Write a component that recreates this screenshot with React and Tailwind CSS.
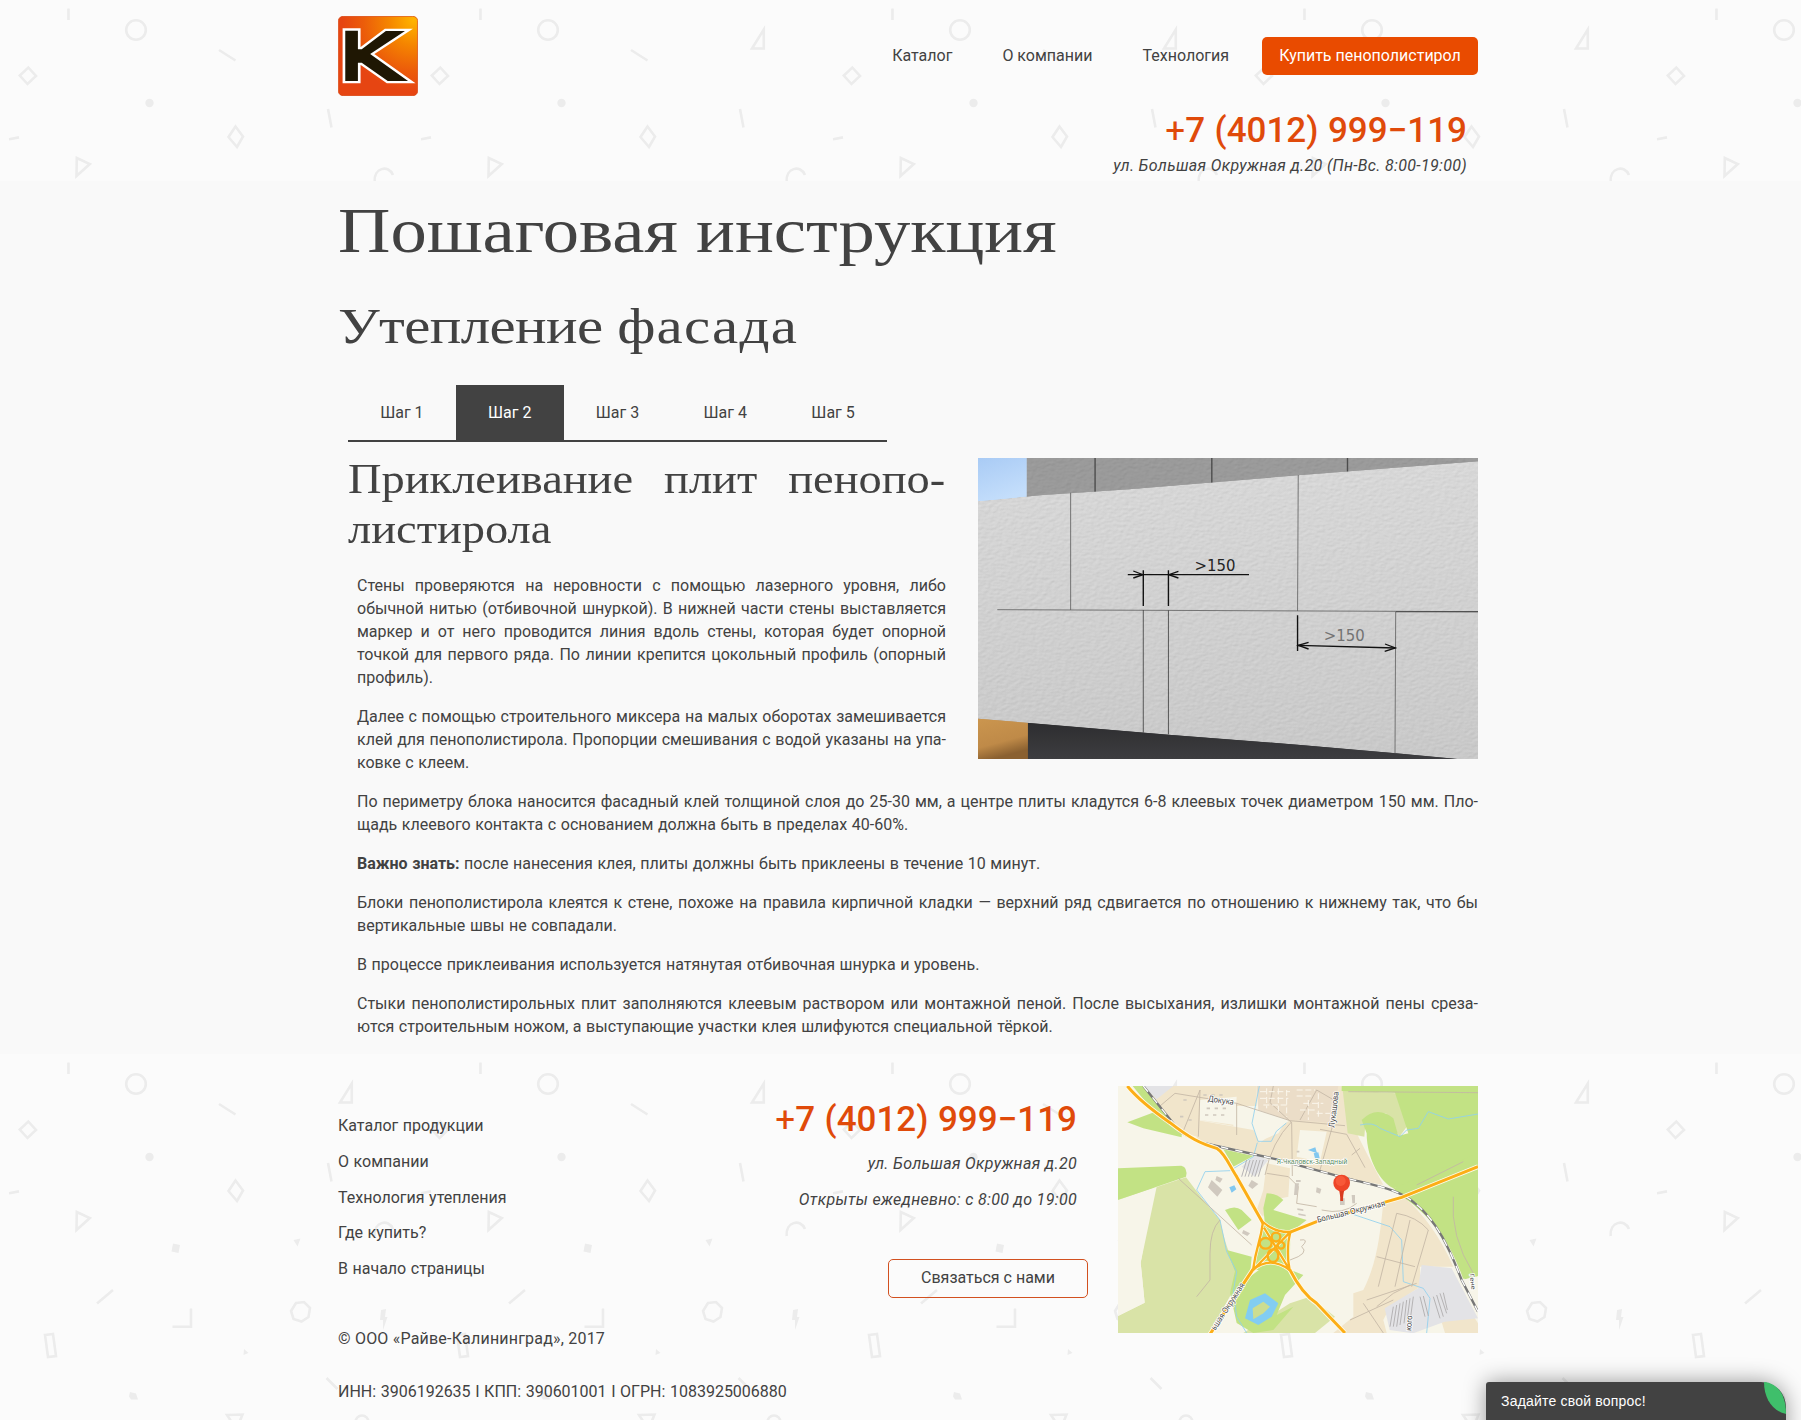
import React from "react";

function Pattern({ id }) {
  return (
    <svg className="absolute inset-0 h-full w-full" aria-hidden="true">
      <defs>
        <pattern id={id} width="412" height="412" patternUnits="userSpaceOnUse">
          <g fill="none" stroke="#ececec" strokeWidth="2.6">
            <path d="M68.5 8.5v11.5M219 50l16.5 10.500M328 109l3.500 18.500M9 139.200l10-1.800M113 236l-16 13.500M326.500 324l11 11" />
            <circle cx="136" cy="30" r="9.800" />
            <path d="M340 48.500h11.800v-19z" />
            <path d="M28.300 67.500l7.700 8.500-8.500 8-7.700-8.500z" />
            <path d="M235.500 126.500l7.500 10-6 10.500-8.500-10z" />
            <path d="M76.800 158l13 6-13.300 12z" />
            <path d="M374.700 182c-1.500-14 14-18 18.300-7" />
            <path d="M191 254.500v18.300h-18.500" />
            <path d="M296 249l8-1 6 6-1.500 9-7 4.500-8-2.500-2.500-8z" />
            <path d="M45 281l8-1 3 22-8 1z" />
            <path d="M227 361l15.500-.5-6 15z" />
            <circle cx="362" cy="368" r="6.500" />
          </g>
          <g fill="#ececec">
            <circle cx="149.500" cy="103" r="4.200" />
            <path d="M173 189.500l7 1.500-1.500 8-7-1.500zM293.500 186l7-1.500-3 8zM381 256l5-1-1 8h2.500l-4.500 13 0-10h-3zM244 295l4.500 4-5 2zM130 338l6 1.500 2 6-7 0-2-3z" />
          </g>
        </pattern>
      </defs>
      <rect width="100%" height="100%" fill={`url(#${id})`} />
    </svg>
  );
}

function Logo() {
  const k = "M902 92h33v56h10l63-55h50l-91 69 99 81h-53l-68-55h-10v55h-33z";
  return (
    <svg className="block h-20 w-20" viewBox="883 48 209 240" preserveAspectRatio="none">
      <defs>
        <radialGradient id="logo-fill" cx="0.95" cy="0.05" r="0.9">
          <stop offset="0" stopColor="#ffb400" />
          <stop offset="0.35" stopColor="#f58500" />
          <stop offset="0.7" stopColor="#ec5d0a" />
          <stop offset="1" stopColor="#e64512" />
        </radialGradient>
      </defs>
      <rect x="884" y="49" width="207" height="238" rx="13" fill="url(#logo-fill)" stroke="#d8440f" strokeWidth="2" />
      <path d={k} fill="#fff" stroke="#fff" strokeWidth="14" strokeLinejoin="miter" />
      <path d={k} fill="#1f1703" />
    </svg>
  );
}

function WallPhoto() {
  return (
    <svg className="block h-[301px] w-[500px] shrink-0" viewBox="52 54 1452 903" preserveAspectRatio="none">
      <defs>
        <linearGradient id="sky" x1="0" y1="0" x2="0.4" y2="1">
          <stop offset="0" stopColor="#a9cbf5" />
          <stop offset="1" stopColor="#c4defb" />
        </linearGradient>
        <linearGradient id="foam" x1="0" y1="0" x2="0" y2="1">
          <stop offset="0" stopColor="#d8d8d8" />
          <stop offset="1" stopColor="#c9c9c9" />
        </linearGradient>
        <linearGradient id="sand" x1="0" y1="0" x2="0.3" y2="1">
          <stop offset="0" stopColor="#cd9850" />
          <stop offset="0.7" stopColor="#bf8a48" />
          <stop offset="1" stopColor="#8a6030" />
        </linearGradient>
        <linearGradient id="base" x1="0" y1="0" x2="0" y2="1">
          <stop offset="0" stopColor="#2b2b2d" />
          <stop offset="1" stopColor="#3d3d40" />
        </linearGradient>
        <filter id="grain" x="0" y="0" width="100%" height="100%">
          <feTurbulence type="fractalNoise" baseFrequency="0.07 0.12" numOctaves="3" seed="4" result="n" />
          <feDiffuseLighting in="n" surfaceScale="1" lightingColor="#fff" result="l">
            <feDistantLight azimuth="235" elevation="60" />
          </feDiffuseLighting>
          <feComposite in="l" in2="SourceGraphic" operator="arithmetic" k1="1.15" k2="0" k3="0" k4="0" />
          <feComposite in2="SourceGraphic" operator="in" />
        </filter>
      </defs>
      <path d="M52 54h142v130H52z" fill="url(#sky)" />
      <path d="M193 54h1311v140H193z" fill="#9a9a9a" filter="url(#grain)" />
      <path d="M392 54v104M731 54v76M1125 54v44" stroke="#4c4c4c" strokeWidth="4" />
      <path d="M52 820h146v137H52z" fill="url(#sand)" />
      <path d="M197 830h1307v127H197z" fill="url(#base)" />
      <path d="M52 184L240 165 490 148 980 106 1504 64V957h-60L1265 940 980 914 605 884 200 849 52 836z" fill="url(#foam)" filter="url(#grain)" />
      <g fill="none" stroke="#626262" strokeWidth="2.500">
        <path d="M321 158v352M982 105l-2 408M108 509l1396 6M1265 516l-2 424" />
        <path d="M532 510v368M605 511v372" stroke="#414141" />
        <path d="M1265 515h239" stroke="#444" strokeWidth="3" />
      </g>
      <g fill="none" stroke="#111" strokeWidth="4">
        <path d="M532 391v107M605 391v107M487 404h352M980 526v107M982 616l282 8" />
        <path d="M503 393l28 11-28 10M634 394l-28 10 28 10M1012 607l-30 9 30 11M1234 612l30 12-31 10" />
      </g>
      <g fontSize="46" fontFamily="DejaVu Sans">
        <text x="681" y="392" textLength="119" lengthAdjust="spacingAndGlyphs" fill="#242424">&gt;150</text>
        <text x="1056" y="604" textLength="119" lengthAdjust="spacingAndGlyphs" fill="#737373">&gt;150</text>
      </g>
    </svg>
  );
}

function AreaMap() {
  const roads = "M82 48Q120 95 210 158C270 205 300 220 350 235C375 250 390 290 410 320L489 460M1134 290L905 382L650 455L569 487M459 598L325 800M569 598C590 640 620 680 650 700L735 789";
  const junction = "M435 408Q431 440 421 475T405 552M435 408Q470 440 517 438M517 438Q503 490 515 552M405 552Q455 508 515 552M438 425L515 552M515 440L405 552";
  return (
    <svg className="block h-[247px] w-[360px]" viewBox="54 48 1080 741" preserveAspectRatio="none">
      <path d="M54 48h1080v741H54z" fill="#f7f5e9" />
      <g fill="#f1e5cb">
        <path d="M130 48h340v60h-70v60l-100 -18-8 50-40-10-130-140z" />
        <path d="M290 150L460 180 480 218 570 150 560 48H725L745 130 770 190 800 250 850 345 740 325 530 265 290 210z" />
        <path d="M500 280l70 15-5 85-45 10-10-15-20 65-20-20 20-60z" />
        <path d="M850 395L910 380C970 430 1020 500 1060 590L960 590 960 650 870 710 850 750 860 789H700L760 740V670L790 660C830 580 840 500 850 395z" />
        <path d="M1020 740l95-10 19 30v29H1035z" />
      </g>
      <path d="M470 48h245l-20 110-130-8-90-30z" fill="#ebddc8" />
      <path d="M300 90l110-10-5 85-105-15zM470 120l90 30-25 40-60 25zM600 180l80 5-20 90-70-15z" fill="#f7f5e9" />
      <path d="M130 48h90l-50 40zM425 290l40-35 40 15-40 50zM965 585l90 10 79 150-100 10-95 35-70-10-15-65 100-60z" fill="#e3e3e6" />
      <g fill="#d9e3a7">
        <path d="M54 390L258 322 310 390 360 450C370 500 385 550 410 600L400 660 330 789H54V738l80-40-12-120 40-230z" />
        <path d="M728 60l160 10 40 90-30 40-40-70-60 10-5 60-50-10z" />
        <path d="M570 700l60-20 75 60-60 49H430z" />
      </g>
      <path d="M54 390L170 350 122 578 134 698 54 738z" fill="#f7f5e9" />
      <g fill="#c2e284">
        <path d="M98 48h32L245 190v12L130 175l-48-18 80-30z" />
        <path d="M54 295l190-8q20 5 14 33L54 390z" />
        <path d="M725 48h409v570l-40 10C1060 540 1020 440 930 385L1134 290 880 355C845 340 800 270 800 190L785 150 Q830 105 880 145L895 198 925 190 885 68l-160-5z" />
        <path d="M880 355L1134 250V300L910 385z" />
        <path d="M910 382L1134 294V618l-45 8C1060 540 1010 450 910 382z" />
        <path d="M370 238l90 20-60 32zM500 370q30 0 50 20l-30 30 100 30-45 35-80-20-5-50zM375 420q30-15 50 0l30 30-40 30z" />
        <path d="M380 540l75 20-5 60 60-45 100 40-55 60-25 60 50-25-60 70-60 9-50-30-20-90 15-65z" />
        <path d="M489 456L571 486 569 600 459 600z" />
      </g>
      <g fill="none" stroke="#8fd0ee" strokeWidth="2.500">
        <path d="M478 48l-22 112 18 54 40 0 15-30 30-25M472 218L460 260 390 302 315 305 290 360 360 450 380 545 410 605 400 665 410 740 440 789M780 165q40-10 60 10l60 25 20-20 35-5 30-50 60 22 89-15M750 430l120 40 35 40 5 125 60 20 20 30-10 104" />
      </g>
      <path d="M450 690l45-20 40 30-20 40-40 25-40-20z" fill="#82cdf2" />
      <path d="M458 715l32-20 20 15-20 20-30 18z" fill="#cddd91" />
      <path d="M388 352l15-6 6 12-14 10zM641 250l14-3 4 18-14 0zM624 240l22-8 5 18" fill="#82c8f0" />
      <g fill="none" stroke="#c3b6a5" strokeWidth="2.500">
        <path d="M180 108l45-38M225 70L410 100l160 52 165 15M245 195L300 60 295 200M410 100v95M520 48l-10 50 65 60 2 160M700 160l-40 140M745 65l389 3M600 150l50-90 60 35M575 155q-60 60-80 160M660 178l80 15 55 100M755 255l25-20M235 325l220 200M500 310l65 10 30 30-5 50 60 10M665 420q65 15 105-20M890 430q60 10 95 50M890 430l-55 220M930 450l-45 200M985 480l-50 170M830 560l115 30M800 690l150-50M750 750l130-60M1060 380q-10 120 60 230M950 345l140-70" />
        <path d="M360 450q-30 30-30 100v80l-40 50M600 510q30-5 5 20 25 20-35 40M790 700l60 89M830 710l50-40 50-25" />
      </g>
      <g stroke="#b5b3b4" strokeWidth="3">
        <path d="M440 270l-15 50M450 270l-15 50M460 270l-15 50M470 270l-15 50M480 270l-15 50M490 270l-15 50M880 710l-10 60M890 705l-10 65M900 700l-10 70M910 695l-10 70M920 690l-8 70M930 685l-8 60M940 680l-8 60M1000 680l20 65M1010 675l20 65M1020 670l20 60M1030 668l12 52M960 680l15 60M970 678l15 60" />
      </g>
      <g fill="#d0c9bf">
        <path d="M335 330l32 30-15 20-28-28zM455 330l20 12-18 15-12-10zM585 340l12 0-5 35-10 0zM650 352l14 5-4 14-12-4zM720 385h14v20h-14zM755 375h10v25h-8zM350 318l18 8-8 12-14-8zM430 480l20 10-8 8-16-8zM592 415l18 3v5l-18-3zM595 430l22 4v5l-22-4zM588 330h14v6h-14z" />
      </g>
      <g fill="none" stroke="#fbf7ec" strokeWidth="3" strokeDasharray="18 8">
        <path d="M480 65h90M480 85h85M590 60h55M590 78h50M490 105h70M610 100h60M600 120h50M650 130h40" />
        <path d="M500 55v60M535 55v70M560 60v80M625 90v60M655 70v70" />
      </g>
      <path d="M320 115h70M315 135h70M310 75h60M590 245h8M240 140h10M265 150h10M250 90h20" fill="none" stroke="#cfc8bd" strokeWidth="5" strokeDasharray="10 14" />
      <g fill="none">
        <path d="M130 48L240 185Q280 215 350 228L530 268 740 325C840 350 900 360 945 400C1010 450 1050 540 1085 630L1134 725" stroke="#777" strokeWidth="7" />
        <path d="M130 48L240 185Q280 215 350 228L530 268 740 325C840 350 900 360 945 400C1010 450 1050 540 1085 630L1134 725" stroke="#fff" strokeWidth="4" strokeDasharray="22 22" />
        <path d={roads} stroke="#fffbe8" strokeWidth="14" />
        <g transform="translate(54 48)" stroke="#fffbe8" strokeWidth="11">
          <path d={junction} />
        </g>
        <path d={roads} stroke="#fcae17" strokeWidth="9" />
        <g transform="translate(54 48)" stroke="#fcae17" strokeWidth="7">
          <path d={junction} />
          <ellipse cx="443" cy="472" rx="18" ry="16" />
          <circle cx="474" cy="453" r="13" />
          <circle cx="489" cy="478" r="10" />
          <ellipse cx="465" cy="509" rx="16" ry="19" />
        </g>
      </g>
      <g fontFamily="Noto Sans" fontSize="25" fill="#454545" stroke="#fff" strokeWidth="5" paintOrder="stroke" strokeLinejoin="round">
        <text transform="translate(323 94) rotate(8)" textLength="78" lengthAdjust="spacingAndGlyphs">Докука</text>
        <text transform="translate(703 173) rotate(-83)" textLength="108" lengthAdjust="spacingAndGlyphs">Лукашова</text>
        <text transform="translate(653 458) rotate(-14)" textLength="210" lengthAdjust="spacingAndGlyphs">Большая Окружная</text>
        <text transform="translate(346 782) rotate(-57)" textLength="163" lengthAdjust="spacingAndGlyphs">ьшая Окружная</text>
        <text transform="translate(934 783) rotate(-86)" textLength="46" lengthAdjust="spacingAndGlyphs">кого</text>
        <text transform="translate(1109 612) rotate(83)" textLength="48" lengthAdjust="spacingAndGlyphs" fontSize="18">Гене</text>
        <text x="530" y="283" textLength="212" lengthAdjust="spacingAndGlyphs" fontSize="22" fill="#57895a">Я-Чкаловск-Западный</text>
      </g>
      <path d="M716 358h18c-4 10-5 24-5 35h-8c0-11-1-25-5-35z" fill="#d93c20" />
      <circle cx="725" cy="339" r="25" fill="#ee4527" />
      <circle cx="722" cy="333" r="15" fill="#ff6845" opacity=".6" />
    </svg>
  );
}

function Para({ lines }) {
  return (
    <p className="mb-4 leading-[23px] [word-spacing:0.600px]">
      {lines.map((line, i) => (
        <span key={i} className={i < lines.length - 1 ? "block whitespace-nowrap [text-align-last:justify]" : "block whitespace-nowrap"}>
          {line}
        </span>
      ))}
    </p>
  );
}

function Phone() {
  return (
    <span className="text-[35px] font-medium text-[#e04a0a] [word-spacing:0.800px]">
      <span className="font-normal">+</span>7 (4012) 999−119
    </span>
  );
}

const tabs = ["Шаг 1", "Шаг 2", "Шаг 3", "Шаг 4", "Шаг 5"];
const links = ["Каталог продукции", "О компании", "Технология утепления", "Где купить?", "В начало страницы"];

export default function App() {
  return (
    <div className="relative h-[1420px] overflow-hidden bg-[#f9f9f9] font-['Roboto',sans-serif] text-base text-[#424242]">
      <header className="relative h-[181px] bg-[#fbfbfb]">
        <Pattern id="shapes-top" />
        <div className="relative ml-[338px] w-[1140px] pt-4">
          <div className="flex h-20 items-center justify-between">
            <Logo />
            <nav className="flex items-center">
              <a className="mr-[50px]">Каталог</a>
              <a className="mr-[50px]">О компании</a>
              <a className="mr-[33px]">Технология</a>
              <a className="flex h-[38px] w-[216px] items-center justify-center rounded-[5px] bg-[#e94b00] text-white">Купить пенополистирол</a>
            </nav>
          </div>
          <div className="pr-[11px] text-right">
            <div className="mt-[11px] h-[43px] leading-[48px]"><Phone /></div>
            <div className="leading-[31px] tracking-[0.330px] italic">ул. Большая Окружная д.20 (Пн-Вс. 8:00-19:00)</div>
          </div>
        </div>
      </header>

      <main className="ml-[338px] h-[873px] w-[1140px] pt-[10px]">
        <h1 className="h-[105px] origin-left scale-x-[1.134] font-['Liberation_Serif',serif] text-[64px] leading-[80px] whitespace-nowrap">Пошаговая инструкция</h1>
        <h2 className="h-[89px] origin-left scale-x-[1.180] font-['Liberation_Serif',serif] text-[50px] leading-[60px] whitespace-nowrap">
          <span className="tracking-[-0.550px]">Утепление</span> <span className="tracking-[1px]">фасада</span>
        </h2>
        <div className="ml-[10px] flex w-[539px] border-b-2 border-[#424242]">
          {tabs.map((t, i) => (
            <div key={t} className={i === 1 ? "flex h-[55px] flex-1 items-center justify-center bg-[#424242] text-white" : "flex h-[55px] flex-1 items-center justify-center"}>{t}</div>
          ))}
        </div>
        <div className="mt-4 flex h-[332px] justify-between">
          <div className="-mt-1 w-[608px]">
            <h3 className="mb-5 ml-[10px] w-[553px] origin-left scale-x-[1.080] font-['Liberation_Serif',serif] text-[43px] leading-[50px]">
              <span className="block whitespace-nowrap [text-align-last:justify]">Приклеивание плит пенопо-</span>
              <span className="block">листирола</span>
            </h3>
            <div className="ml-[19px]">
              <Para lines={["Стены проверяются на неровности с помощью лазерного уровня, либо", "обычной нитью (отбивочной шнуркой). В нижней части стены выставляется", "маркер и от него проводится линия вдоль стены, которая будет опорной", "точкой для первого ряда. По линии крепится цокольный профиль (опорный", "профиль)."]} />
              <Para lines={["Далее с помощью строительного миксера на малых оборотах замешивается", "клей для пенополистирола. Пропорции смешивания с водой указаны на упа-", "ковке с клеем."]} />
            </div>
          </div>
          <WallPhoto />
        </div>
        <div className="ml-[19px]">
          <Para lines={["По периметру блока наносится фасадный клей толщиной слоя до 25-30 мм, а центре плиты кладутся 6-8 клеевых точек диаметром 150 мм. Пло-", "щадь клеевого контакта с основанием должна быть в пределах 40-60%."]} />
          <Para lines={[<><b>Важно знать:</b> после нанесения клея, плиты должны быть приклеены в течение 10 минут.</>]} />
          <Para lines={["Блоки пенополистирола клеятся к стене, похоже на правила кирпичной кладки — верхний ряд сдвигается по отношению к нижнему так, что бы", "вертикальные швы не совпадали."]} />
          <Para lines={["В процессе приклеивания используется натянутая отбивочная шнурка и уровень."]} />
          <Para lines={["Стыки пенополистирольных плит заполняются клеевым раствором или монтажной пеной. После высыхания, излишки монтажной пены среза-", "ются строительным ножом, а выступающие участки клея шлифуются специальной тёркой."]} />
        </div>
      </main>

      <footer className="relative h-[366px] bg-[#fbfbfb]">
        <Pattern id="shapes-bottom" />
        <div className="relative ml-[338px] flex w-[1140px] pt-8">
          <div className="w-[380px] pt-[22.200px]">
            {links.map((l) => (
              <div key={l} className="leading-[35.700px] [word-spacing:0.600px]">{l}</div>
            ))}
            <div className="mt-[33px] leading-[37px] tracking-[0.200px] whitespace-nowrap">© ООО «Райве-Калининград», 2017</div>
            <div className="mt-4 leading-[37px] whitespace-nowrap [word-spacing:0.600px]">ИНН: 3906192635 I КПП: 390601001 I ОГРН: 1083925006880</div>
          </div>
          <div className="flex w-[370px] flex-col items-end pt-[10px] text-right">
            <div className="h-[50px] pr-[11px] leading-[48px] whitespace-nowrap"><Phone /></div>
            <div className="pr-[11px] leading-[36px] tracking-[0.330px] italic">ул. Большая Окружная д.20</div>
            <div className="pr-[11px] leading-[36px] tracking-[0.330px] italic">Открыты ежедневно: с 8:00 до 19:00</div>
            <div className="mt-[41px] flex h-[39px] w-[200px] items-center justify-center rounded-[5px] border border-[#d2501f] pb-px">Связаться с нами</div>
          </div>
          <div className="ml-[30px]">
            <AreaMap />
          </div>
        </div>
      </footer>

      <div className="absolute top-[1382px] left-[1486px] h-[60px] w-[300px] rounded-tl-[3px] rounded-tr-[25px] bg-[#424242] shadow-[0_0_22px_rgba(0,0,0,0.4)]">
        <div className="pl-[15px] font-['Liberation_Sans',sans-serif] text-sm leading-[38px] tracking-[0.200px] text-white">Задайте свой вопрос!</div>
        <svg className="absolute top-0 right-0 h-8 w-[22px]" viewBox="0 0 22 32">
          <path d="M0 0C13 1 22 12 22 32 8 29 0 16 0 0z" fill="#3fbf6b" />
        </svg>
      </div>
    </div>
  );
}
